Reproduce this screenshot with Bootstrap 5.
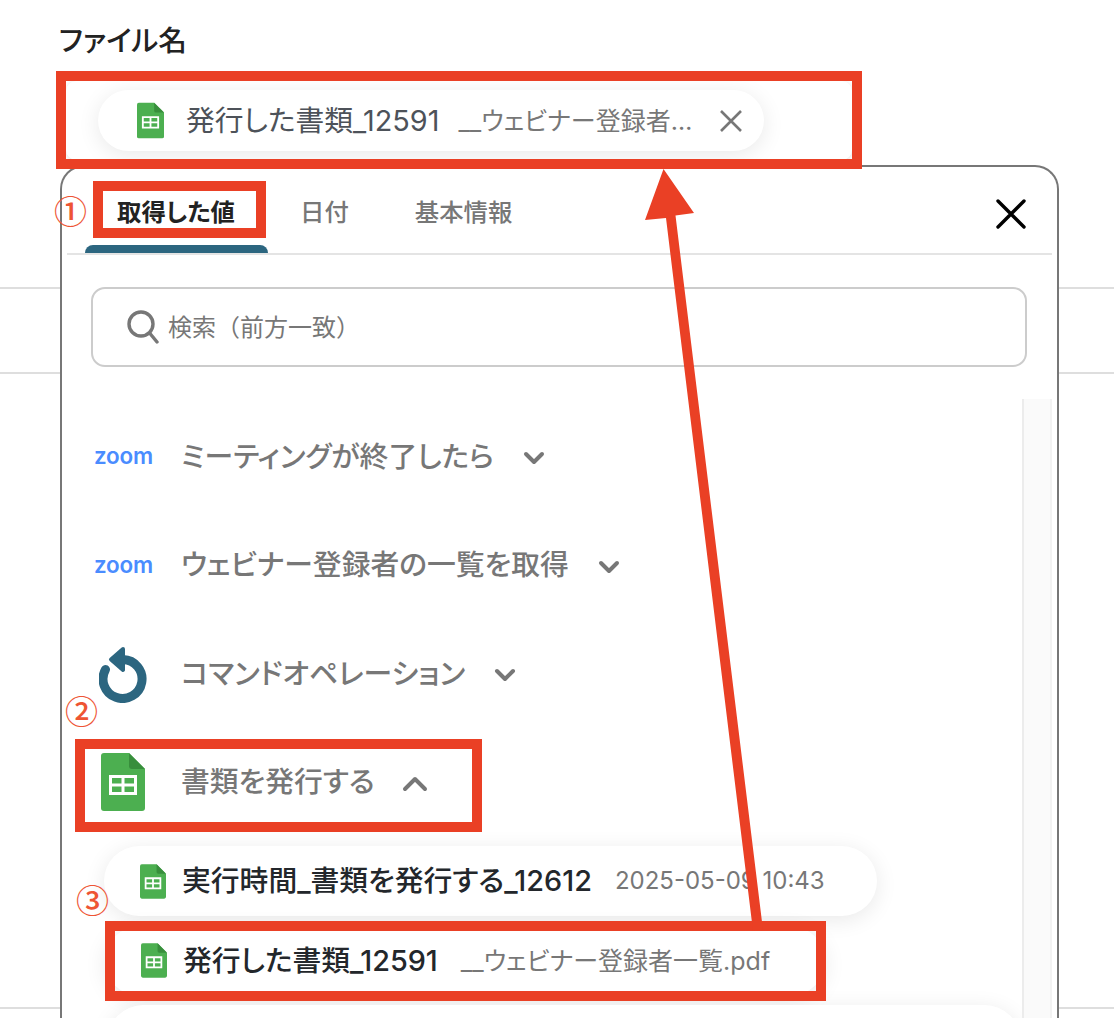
<!DOCTYPE html>
<html lang="ja">
<head>
<meta charset="utf-8">
<title>ファイル名</title>
<link href="https://cdn.jsdelivr.net/npm/bootstrap@5.3.0/dist/css/bootstrap.min.css" rel="stylesheet">
<style>
:root { --ui-font: Inter, "Noto Sans CJK JP", sans-serif; --red: #ea4025; --teal: #2c6680; --grey: #777; }
html, body { margin: 0; background: #fff; }
body { font-family: var(--ui-font); font-feature-settings: "palt"; overflow: hidden; }
.stage { position: relative; width: 1114px; height: 1018px; overflow: hidden;
  background-image: linear-gradient(#dedede,#dedede), linear-gradient(#dedede,#dedede), linear-gradient(#dedede,#dedede);
  background-size: 100% 2px; background-repeat: no-repeat; background-position: 0 287px, 0 372px, 0 1007px; }
.field-label { margin: 0 0 0 59px; padding-top: 23px; height: 81px; font-size: 28.7px; line-height: 36px; font-weight: 500; color: #222; }
.field-box { margin-left: 66px; width: 786px; height: 79px; padding-left: 32px; border-radius: 10px; background: #fff; box-shadow: 0 1px 5px rgba(0,0,0,.12); }
.token { background: #fff; border-radius: 36px; box-shadow: 0 4px 22px rgba(0,0,0,.09); }
.token-top { width: 666px; height: 61px; padding: 0 21px 0 39px; }
.token-name { font-size: 28.8px; line-height: 36px; color: #23272b; font-weight: 500; white-space: nowrap; }
.token-top .token-name { font-weight: 400; color: #4d5259; margin-left: 22px; }
.token-val { font-size: 25px; line-height: 36px; color: var(--grey); white-space: nowrap; margin-left: 23px; }
.token-top .token-val { margin-left: 19px; }
.token-stamp { font-size: 24px; }
.panel { margin: 5px 0 0 60px; width: 999px; height: 900px; border: 2px solid var(--grey); border-bottom: 0; border-radius: 24px 24px 0 0; background: #fff; position: relative; overflow: hidden; }
.tabbar { margin: 0 5px; height: 88px; border-bottom: 2px solid #e4e4e4; }
.tabbar .nav-link { position: relative; height: 86px; padding: 30px 0 0; font-size: 24.4px; line-height: 30px; font-weight: 500; color: var(--grey); }
.tabbar .tab-a { width: 183px; margin-left: 18px; padding-left: 32px; color: #222; font-weight: 700; }
.tabbar .tab-a::after { content: ""; position: absolute; left: 0; right: 0; bottom: 0; height: 8px; background: var(--teal); border-radius: 8px 8px 0 0; }
.tabbar .tab-b { margin-left: 32px; }
.tabbar .tab-c { margin-left: 66px; }
.tab-close { margin: 32px 26px 0 auto; border: 0; padding: 0; background: none; line-height: 0; }
.search-box { margin: 32px 30px 0 29px; height: 80px; padding: 0 0 0 34px; border: 2px solid #ccc; border-radius: 14px; }
.search-box svg { flex: none; margin-right: 9px; }
.search-box input { border: 0; outline: 0; padding: 0; font-size: 24px; background: none; flex: 1; transform: translateY(1px); }
.search-box input::placeholder { color: var(--grey); opacity: 1; }
.body-wrap { margin-top: 32px; margin-right: 5px; }
.rows { flex: 1; min-width: 0; padding-top: 3px; }
.track { width: 30px; flex: none; height: 700px; background: #fafafa; border-left: 2px solid #ececec; border-right: 2px solid #f2f2f2; }
.app-row { height: 108.6px; padding-left: 119px; font-size: 28.8px; font-weight: 500; color: var(--grey); white-space: nowrap; }
.app-icon { flex: none; width: 90px; margin-left: -90px; }
.app-icon svg { display: block; }
.ico-refresh { margin-left: 8px; margin-top: 3px; }
.ico-sheet { margin-left: 10px; }
.zoom-word { display: block; margin-left: 3px; font-family: Inter, sans-serif; font-size: 22.4px; line-height: 1; font-weight: 600; color: #4a8cff; letter-spacing: -.2px; }
.chev { flex: none; margin-left: 29px; margin-top: 4px; }
.chev-up { margin-left: 27px; }
.tokens { padding: 0 0 0 42px; margin-top: 10px; }
.token-row { height: 70px; padding-left: 36px; margin-bottom: 9.5px; }
.token-icon { margin-right: 16px; flex: none; }
.token-date { width: 773px; }
.token-file { width: 720px; margin-left: 1px; }
.token-next { width: 912px; margin-left: 4px; }
.mark-box { position: absolute; border: 10px solid var(--red); pointer-events: none; }
.mb-1st { left: 56px; top: 71px; width: 806px; height: 98px; }
.mb-2nd { left: 93px; top: 181px; width: 173px; height: 57px; }
.mb-3rd { left: 75px; top: 739px; width: 407px; height: 93px; }
.mb-4th { left: 105px; top: 921px; width: 721px; height: 80px; }
.num-tag { position: absolute; font-family: "Noto Sans CJK JP", sans-serif; font-size: 33px; line-height: 33px; color: #ee5434; font-weight: 500; font-feature-settings: normal; }
.nt-1 { left: 54px; top: 194px; }
.nt-2 { left: 65px; top: 694px; }
.nt-3 { left: 76px; top: 883px; }
.arrow-layer { position: absolute; left: 0; top: 0; pointer-events: none; }
</style>
</head>
<body>
<svg width="0" height="0" class="position-absolute" aria-hidden="true">
  <symbol id="sheet" viewBox="0 0 44 58">
    <path d="M3 0H28L44 16V55a3 3 0 0 1-3 3H3a3 3 0 0 1-3-3V3a3 3 0 0 1 3-3Z" fill="#4caf50"/>
    <path d="M28 0L44 16H31a3 3 0 0 1-3-3Z" fill="#388e3c"/>
    <path d="M8 22H36V42H8ZM11 25V30.500H20.500V25ZM23.500 25V30.500H33V25ZM11 33.500V39H20.500V33.500ZM23.500 33.500V39H33V33.500Z" fill="#fff" fill-rule="evenodd"/>
  </symbol>
</svg>
<div class="stage">
  <p class="field-label">ファイル名</p>
  <div class="field-box d-flex align-items-center">
    <div class="token token-top d-flex align-items-center">
      <svg class="flex-shrink-0" width="27" height="37"><use href="#sheet"/></svg>
      <span class="token-name">発行した書類_12591</span>
      <span class="token-val flex-grow-1">__ウェビナー登録者…</span>
      <svg class="flex-shrink-0" width="24" height="24" viewBox="0 0 24 24" fill="none" stroke="#777" stroke-width="2.600"><path d="M2 2L22 22M22 2L2 22"/></svg>
    </div>
  </div>

  <div class="panel">
    <div class="tabbar d-flex align-items-start">
      <a class="nav-link tab-a">取得した値</a>
      <a class="nav-link tab-b">日付</a>
      <a class="nav-link tab-c">基本情報</a>
      <button class="tab-close" type="button" aria-label="閉じる">
        <svg width="30" height="30" viewBox="0 0 30 30" fill="none" stroke="#000" stroke-width="3.400" stroke-linecap="round"><path d="M2 2L28 28M28 2L2 28"/></svg>
      </button>
    </div>
    <div class="search-box d-flex align-items-center">
      <svg width="32" height="34" viewBox="0 0 32 34" fill="none" stroke="#777" stroke-width="3.400" stroke-linecap="round"><circle cx="14" cy="14" r="12"/><path d="M23 23.500L30 32"/></svg>
      <input type="text" placeholder="検索（前方一致）" aria-label="検索">
    </div>
    <div class="body-wrap d-flex">
      <div class="rows">
        <div class="app-row d-flex align-items-center">
          <span class="app-icon"><span class="zoom-word">zoom</span></span>
          <span>ミーティングが終了したら</span>
          <svg class="chev" width="22" height="14" viewBox="0 0 22 14" fill="none" stroke="#777" stroke-width="4" stroke-linecap="round" stroke-linejoin="round"><path d="M3 3L11 11L19 3"/></svg>
        </div>
        <div class="app-row d-flex align-items-center">
          <span class="app-icon"><span class="zoom-word">zoom</span></span>
          <span>ウェビナー登録者の一覧を取得</span>
          <svg class="chev" width="22" height="14" viewBox="0 0 22 14" fill="none" stroke="#777" stroke-width="4" stroke-linecap="round" stroke-linejoin="round"><path d="M3 3L11 11L19 3"/></svg>
        </div>
        <div class="app-row d-flex align-items-center">
          <span class="app-icon"><svg class="ico-refresh" width="48" height="57" viewBox="0 0 48 57" fill="none"><path d="M6.500 23.500A19.500 19.500 0 1 0 24 13.500" stroke="#2c6680" stroke-width="9" stroke-linecap="round"/><path d="M24 3L12 13.500L24 24Z" fill="#2c6680" stroke="#2c6680" stroke-width="4" stroke-linejoin="round"/></svg></span>
          <span>コマンドオペレーション</span>
          <svg class="chev" width="22" height="14" viewBox="0 0 22 14" fill="none" stroke="#777" stroke-width="4" stroke-linecap="round" stroke-linejoin="round"><path d="M3 3L11 11L19 3"/></svg>
        </div>
        <div class="app-row d-flex align-items-center">
          <span class="app-icon"><svg class="ico-sheet" width="44" height="58"><use href="#sheet"/></svg></span>
          <span>書類を発行する</span>
          <svg class="chev chev-up" width="26" height="16" viewBox="0 0 26 16" fill="none" stroke="#777" stroke-width="4" stroke-linecap="round" stroke-linejoin="round"><path d="M3 13L13 3L23 13"/></svg>
        </div>
        <div class="tokens">
          <div class="token token-row token-date d-flex align-items-center">
            <svg class="token-icon" width="26" height="37"><use href="#sheet"/></svg>
            <span class="token-name">実行時間_書類を発行する_12612</span>
            <span class="token-val token-stamp">2025-05-09 10:43</span>
          </div>
          <div class="token token-row token-file d-flex align-items-center">
            <svg class="token-icon" width="26" height="37"><use href="#sheet"/></svg>
            <span class="token-name">発行した書類_12591</span>
            <span class="token-val">__ウェビナー登録者一覧.pdf</span>
          </div>
          <div class="token token-row token-next"></div>
        </div>
      </div>
      <div class="track"></div>
    </div>
  </div>

  <div class="mark-box mb-1st"></div>
  <div class="mark-box mb-2nd"></div>
  <div class="mark-box mb-3rd"></div>
  <div class="mark-box mb-4th"></div>
  <span class="num-tag nt-1">①</span>
  <span class="num-tag nt-2">②</span>
  <span class="num-tag nt-3">③</span>
  <svg class="arrow-layer" width="1114" height="1018" viewBox="0 0 1114 1018"><path d="M663.500 169L694 213L675.500 215.500L763 930L753 931L666 218L645 220Z" fill="#ea4025"/></svg>
</div>
<script src="https://cdn.jsdelivr.net/npm/bootstrap@5.3.0/dist/js/bootstrap.bundle.min.js"></script>
</body>
</html>
